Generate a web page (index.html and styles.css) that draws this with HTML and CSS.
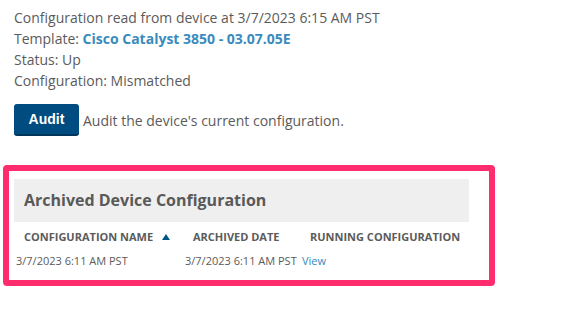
FILE: index.html
```html
<!DOCTYPE html>
<html>
<head>
    <link rel="stylesheet" href="styles.css">
</head>
<body>
    <div class="page">
        <div class="device-info">
            <div>Configuration read from device at 3/7/2023 6:15 AM PST</div>
            <div>Template: <a class="template-link" href="#">Cisco Catalyst 3850 - 03.07.05E</a></div>
            <div>Status: Up</div>
            <div>Configuration: Mismatched</div>
        </div>

        <div class="audit-row">
            <button class="audit-button">Audit</button>
            <span>Audit the device's current configuration.</span>
        </div>

        <div class="archive">
            <div class="archive-header">Archived Device Configuration</div>
            <div class="archive-table">
                <div class="col-head">Configuration Name <span class="sort-arrow"></span></div>
                <div class="col-head">Archived Date</div>
                <div class="col-head">Running Configuration</div>

                <div class="cell">3/7/2023 6:11 AM PST</div>
                <div class="cell">3/7/2023 6:11 AM PST</div>
                <div class="cell"><a class="view-link" href="#">View</a></div>
            </div>
        </div>
    </div>
</body>
</html>
```

FILE: styles.css
```css
body {
    margin: 0;
    background-color: #ffffff;
    color: #5b5b5b;
    font-family: 'Open Sans', 'Liberation Sans', sans-serif;
}
.page {
    padding: 7px 0 0 3px;
}
.device-info {
    padding-left: 11px;
    font-size: 14px;
    line-height: 21px;
}
.template-link {
    color: #3a8bbd;
    font-weight: bold;
    text-decoration: none;
}
.audit-row {
    display: flex;
    align-items: center;
    gap: 4px;
    margin-top: 13px;
    padding-left: 11px;
    font-size: 14px;
}
.audit-button {
    width: 65px;
    height: 32px;
    background-color: #004b7f;
    color: #ffffff;
    border: none;
    border-bottom: 2px solid #00365c;
    border-radius: 3px;
    font-family: 'Liberation Sans', Arial, sans-serif;
    font-weight: bold;
    font-size: 14px;
    padding: 0;
}
.archive {
    width: 455px;
    height: 101px;
    margin-top: 29px;
    border: 6px solid #ff2d6e;
    border-radius: 4px;
    padding: 8px 20px 0 5px;
}
.archive-header {
    background-color: #efefef;
    height: 43px;
    line-height: 43px;
    padding-left: 10px;
    font-size: 16px;
    font-weight: bold;
    color: #595959;
}
.archive-table {
    display: grid;
    grid-template-columns: 169px 117px 1fr;
    margin-left: 2px;
    font-size: 11px;
}
.col-head {
    padding: 7px 0 7px 8px;
    font-weight: bold;
    text-transform: uppercase;
    color: #5b5b5b;
    white-space: nowrap;
}
.sort-arrow {
    display: inline-block;
    margin-left: 6px;
    width: 0;
    height: 0;
    border-left: 4px solid transparent;
    border-right: 4px solid transparent;
    border-bottom: 6px solid #00577f;
    vertical-align: 1px;
}
.cell {
    padding-top: 2px;
    white-space: nowrap;
}
.view-link {
    color: #3a8bbd;
    text-decoration: none;
}
```
